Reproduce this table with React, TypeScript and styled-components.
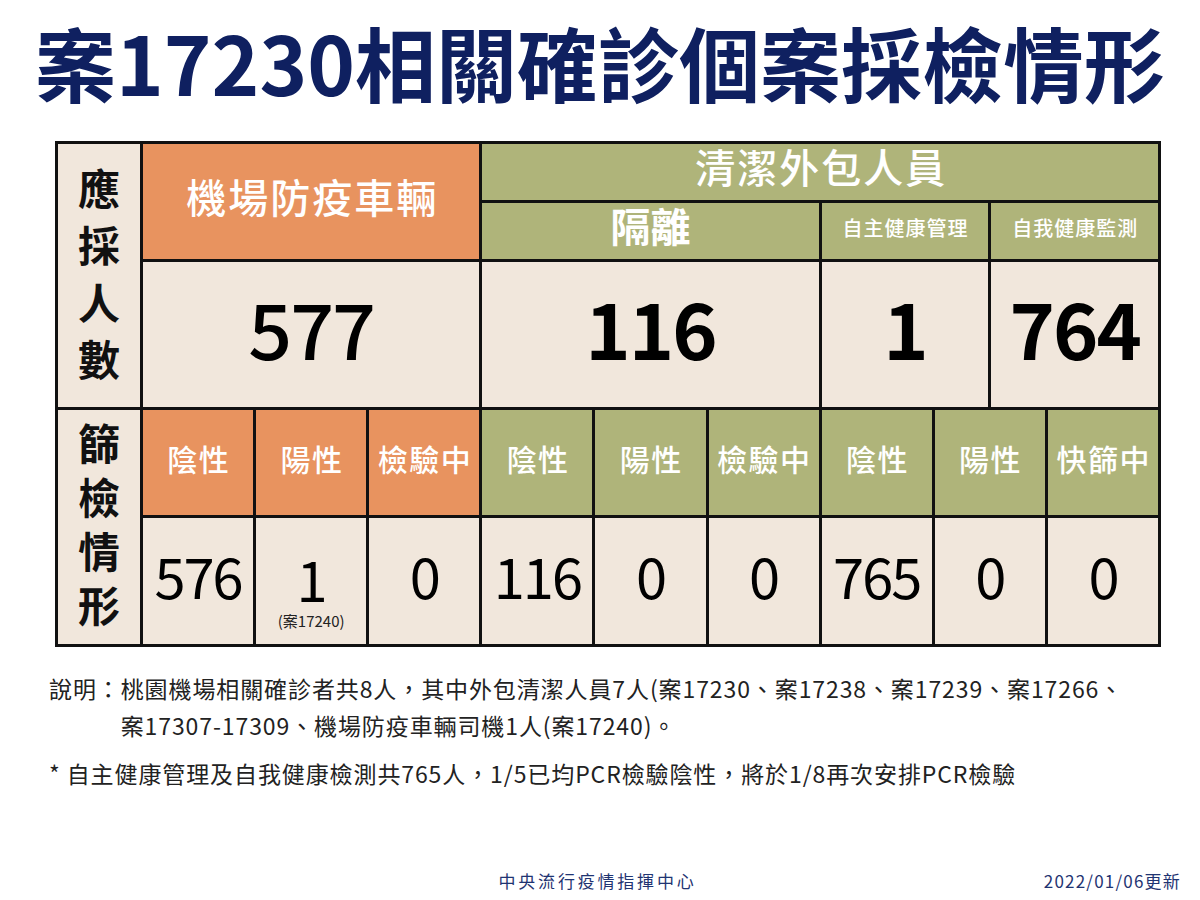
import React from "react";
import styled, { createGlobalStyle } from "styled-components";

const GlobalStyle = createGlobalStyle`
  html, body { margin: 0; padding: 0; background: #ffffff; }
  body { font-family: "Noto Sans CJK TC", "Noto Sans", sans-serif; }
`;

type Tone = "orange" | "green" | "beige";
const toneColor: Record<Tone, string> = {
  orange: "#E8935F",
  green: "#AFB47A",
  beige: "#F1E7DC",
};

const Page = styled.div`
  width: 1200px;
  height: 900px;
  display: flex;
  flex-direction: column;
  overflow: hidden;
  box-sizing: border-box;
`;

const Title = styled.h1`
  margin: 0;
  padding-top: 13px;
  height: 96px;
  line-height: 96px;
  text-align: center;
  font-size: 81px;
  font-weight: 700;
  color: #0f2060;
  white-space: nowrap;
`;

const Table = styled.div`
  margin: 32px 0 0 55px;
  width: 1106px;
  box-sizing: border-box;
  display: grid;
  grid-template-columns: 82px repeat(18, 1fr);
  grid-template-rows: 56px 56px 145px 105px 126px;
  gap: 3px;
  padding: 3px;
  background: #111111;
`;

const Cell = styled.div<{ $tone: Tone; $col: string; $row: string }>`
  grid-column: ${(p) => p.$col};
  grid-row: ${(p) => p.$row};
  background: ${(p) => toneColor[p.$tone]};
  display: flex;
  flex-direction: column;
  align-items: center;
  justify-content: center;
  min-width: 0;
`;

const SideLabel = styled.div<{ $pitch: number }>`
  display: flex;
  flex-direction: column;
  align-items: center;
  font-size: 42px;
  line-height: ${(p) => p.$pitch}px;
  padding-bottom: 8px;
  font-weight: 700;
  color: #111111;
`;

const HeadText = styled.span<{ $size: number; $spacing: number; $weight?: number }>`
  color: #ffffff;
  font-size: ${(p) => p.$size}px;
  font-weight: ${(p) => p.$weight ?? 500};
  letter-spacing: ${(p) => p.$spacing}px;
  padding-left: ${(p) => p.$spacing}px;
  padding-bottom: 0.3em;
  line-height: 1.2;
  white-space: nowrap;
`;

const Num = styled.span<{ $size: number; $weight: number; $spacing: number }>`
  color: #000000;
  font-size: ${(p) => p.$size}px;
  font-weight: ${(p) => p.$weight};
  letter-spacing: ${(p) => p.$spacing}px;
  line-height: 1;
  padding-bottom: 0.22em;
  white-space: nowrap;
`;

const CaseNote = styled.span`
  height: 0;
  margin-top: -7px;
  overflow: visible;
  font-size: 15px;
  line-height: 18px;
  color: #222222;
  white-space: nowrap;
`;

const Notes = styled.div`
  margin: 23px 0 0 49px;
  color: #222222;
  font-size: 23px;
  line-height: 37px;
  letter-spacing: 0.9px;
  display: flex;
  flex-direction: column;
  gap: 11px;
`;

const NoteRow = styled.div`
  display: flex;
  white-space: nowrap;
`;

const NoteBody = styled.div`
  display: flex;
  flex-direction: column;
`;

const Footer = styled.div`
  margin-top: auto;
  padding: 0 19px 7px 14px;
  display: grid;
  grid-template-columns: 1fr auto 1fr;
  align-items: center;
  font-size: 17px;
  line-height: 24px;
  color: #1f3472;
`;

const FooterCenter = styled.span`
  letter-spacing: 2.8px;
  white-space: nowrap;
`;

const FooterDate = styled.span`
  justify-self: end;
  letter-spacing: 1.2px;
  white-space: nowrap;
`;

const screening: { head: string; value: string; tone: Tone; note?: string }[] = [
  { head: "陰性", value: "576", tone: "orange" },
  { head: "陽性", value: "1", tone: "orange", note: "(案17240)" },
  { head: "檢驗中", value: "0", tone: "orange" },
  { head: "陰性", value: "116", tone: "green" },
  { head: "陽性", value: "0", tone: "green" },
  { head: "檢驗中", value: "0", tone: "green" },
  { head: "陰性", value: "765", tone: "green" },
  { head: "陽性", value: "0", tone: "green" },
  { head: "快篩中", value: "0", tone: "green" },
];

export default function App() {
  return (
    <Page>
      <GlobalStyle />
      <Title>案17230相關確診個案採檢情形</Title>
      <Table>
        <Cell $tone="beige" $col="1" $row="1 / span 3">
          <SideLabel $pitch={57}>
            <span>應</span>
            <span>採</span>
            <span>人</span>
            <span>數</span>
          </SideLabel>
        </Cell>
        <Cell $tone="orange" $col="2 / span 6" $row="1 / span 2">
          <HeadText $size={40} $spacing={2}>機場防疫車輛</HeadText>
        </Cell>
        <Cell $tone="green" $col="8 / span 12" $row="1">
          <HeadText $size={40} $spacing={2}>清潔外包人員</HeadText>
        </Cell>
        <Cell $tone="green" $col="8 / span 6" $row="2">
          <HeadText $size={40} $spacing={0} $weight={700}>隔離</HeadText>
        </Cell>
        <Cell $tone="green" $col="14 / span 3" $row="2">
          <HeadText $size={20} $spacing={1}>自主健康管理</HeadText>
        </Cell>
        <Cell $tone="green" $col="17 / span 3" $row="2">
          <HeadText $size={20} $spacing={1}>自我健康監測</HeadText>
        </Cell>
        <Cell $tone="beige" $col="2 / span 6" $row="3">
          <Num $size={77} $weight={500} $spacing={-2}>577</Num>
        </Cell>
        <Cell $tone="beige" $col="8 / span 6" $row="3">
          <Num $size={77} $weight={600} $spacing={-2}>116</Num>
        </Cell>
        <Cell $tone="beige" $col="14 / span 3" $row="3">
          <Num $size={77} $weight={600} $spacing={-2}>1</Num>
        </Cell>
        <Cell $tone="beige" $col="17 / span 3" $row="3">
          <Num $size={77} $weight={600} $spacing={-2}>764</Num>
        </Cell>
        <Cell $tone="beige" $col="1" $row="4 / span 2">
          <SideLabel $pitch={54}>
            <span>篩</span>
            <span>檢</span>
            <span>情</span>
            <span>形</span>
          </SideLabel>
        </Cell>
        {screening.map((s, i) => (
          <Cell key={`h${i}`} $tone={s.tone} $col={`${2 + i * 2} / span 2`} $row="4">
            <HeadText $size={30} $spacing={1.5}>{s.head}</HeadText>
          </Cell>
        ))}
        {screening.map((s, i) => (
          <Cell key={`v${i}`} $tone="beige" $col={`${2 + i * 2} / span 2`} $row="5">
            <Num $size={56} $weight={400} $spacing={-2}>{s.value}</Num>
            {s.note && <CaseNote>{s.note}</CaseNote>}
          </Cell>
        ))}
      </Table>
      <Notes>
        <NoteRow>
          <span>說明：</span>
          <NoteBody>
            <span>桃園機場相關確診者共8人，其中外包清潔人員7人(案17230、案17238、案17239、案17266、</span>
            <span>案17307-17309、機場防疫車輛司機1人(案17240)。</span>
          </NoteBody>
        </NoteRow>
        <NoteRow>
          <span>* 自主健康管理及自我健康檢測共765人，1/5已均PCR檢驗陰性，將於1/8再次安排PCR檢驗</span>
        </NoteRow>
      </Notes>
      <Footer>
        <span />
        <FooterCenter>中央流行疫情指揮中心</FooterCenter>
        <FooterDate>2022/01/06更新</FooterDate>
      </Footer>
    </Page>
  );
}
